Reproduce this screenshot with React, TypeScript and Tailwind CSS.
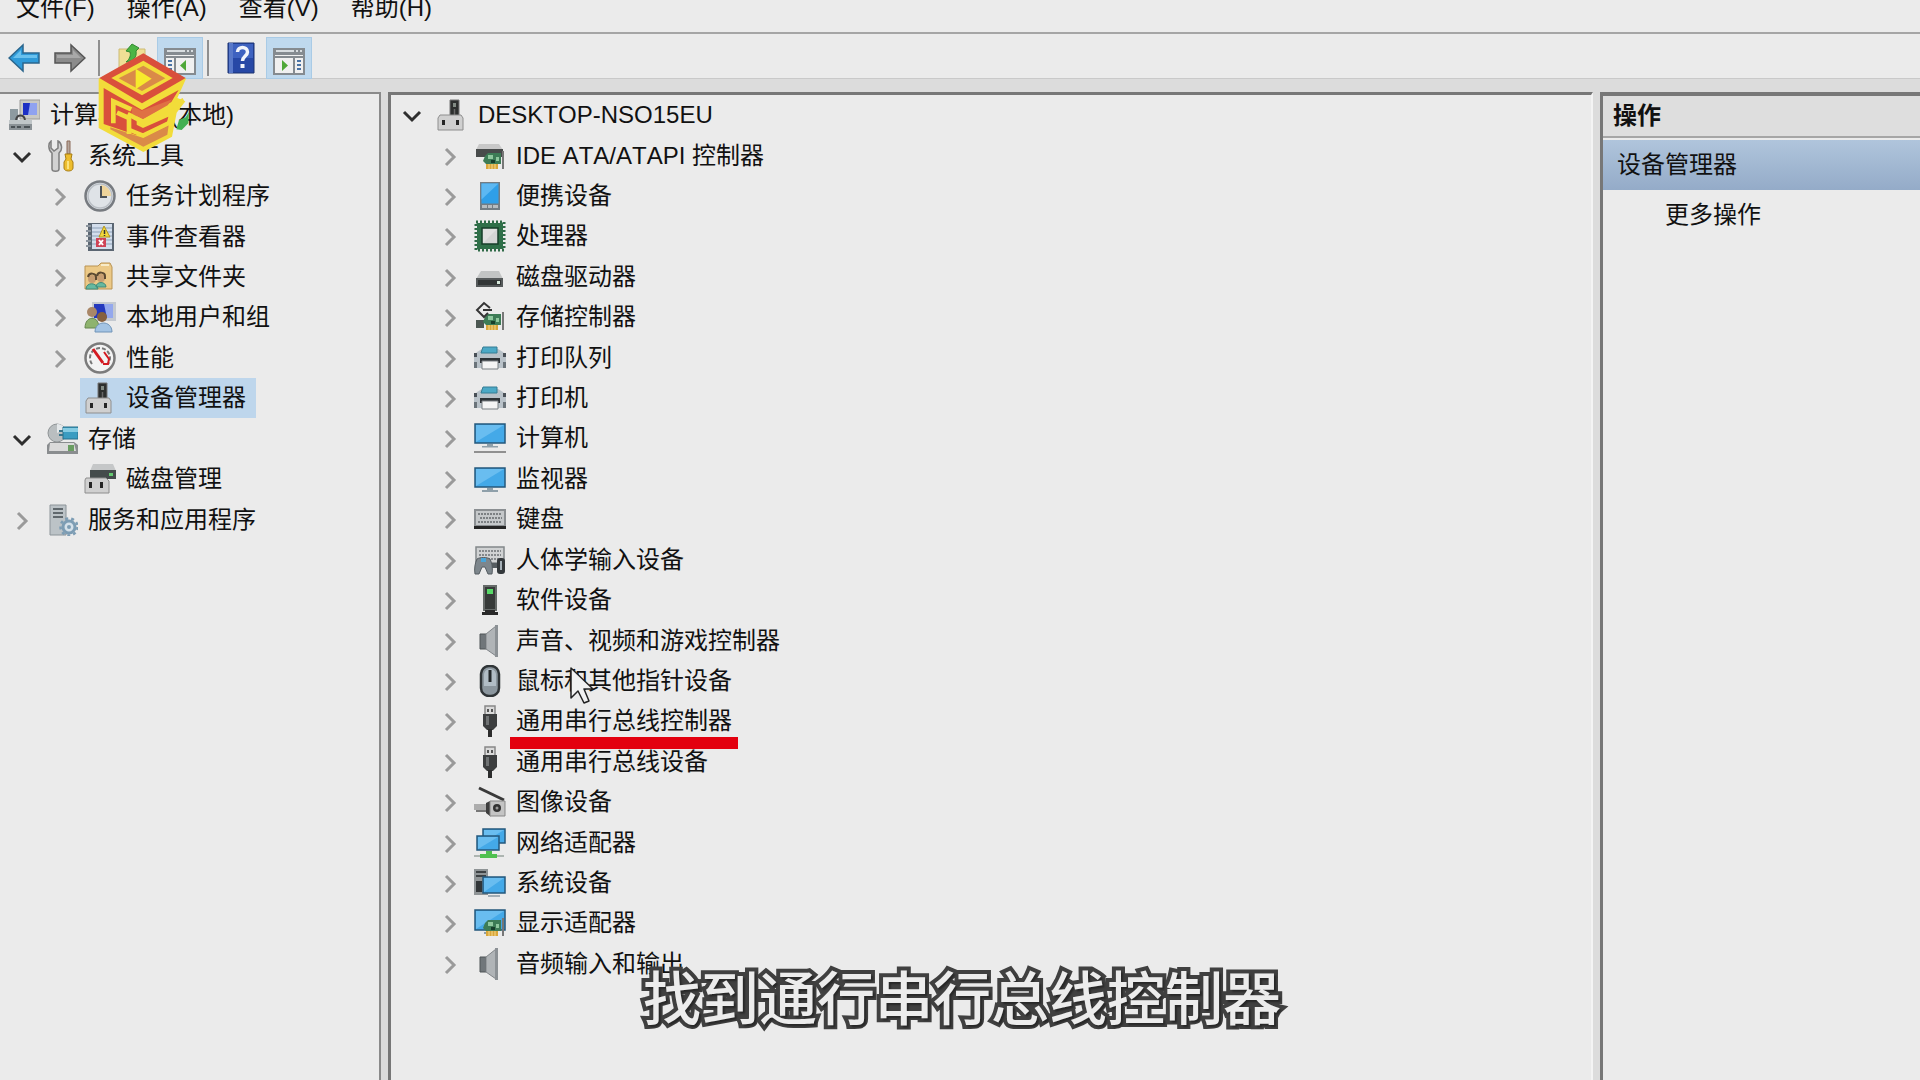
import { ReactNode } from "react";
import clsx from "clsx";

interface NodeProps {
  label: string;
  icon: ReactNode;
  level?: number;
  arrow?: "open" | "closed" | "none";
  selected?: boolean;
  children?: ReactNode;
}

const Svg = ({ children }: { children: ReactNode }) => (
  <svg viewBox="0 0 32 32" className="h-8 w-8 shrink-0" fill="none" aria-hidden="true">
    {children}
  </svg>
);

// === SHARED PARTS OF THE DEVICE ICONS
const Board = () => (
  <g>
    <path d="M11 16l3-3h13v11H12l-3-3z" fill="#3d7c56" />
    <path d="M14 15h5v4h-5zM22 17h3v4h-3z" fill="#8ec79d" />
    <path d="M17 20h4v3h-4z" fill="#173f2b" />
    <path d="M12 24h12v5H12z" fill="#d9a63a" />
    <path d="M15 24v5M18 24v5M21 24v5" stroke="#f3d98d" />
    <path d="M29 11v18" stroke="#777" strokeWidth="2" />
  </g>
);

const Screen = ({ x, y, w, h }: { x: number; y: number; w: number; h: number }) => (
  <g>
    <rect x={x} y={y} width={w} height={h} fill="#44a9e8" stroke="#24587c" strokeWidth="1.5" />
    <path d={`M${x + 1} ${y + h - 1}L${x + w - 1} ${y + 1}V${y + 1}H${x + 1}z`} fill="#69bdf0" />
  </g>
);

// === LEFT TREE ICONS
const ComputerIcon = () => (
  <Svg>
    <path d="M12 1h20v19H12z" fill="#c9c9c4" stroke="#9b9b98" />
    <path d="M15 4h14v12H15z" fill="#1d30c4" />
    <path d="M22 4h7v12h-9z" fill="#8fa2f0" />
    <path d="M2 10h8v12H2z" fill="#8d9aa0" />
    <path d="M8 21c1-6 8-6 9 0" stroke="#444" strokeWidth="2" />
    <path d="M1 21h23v10H1z" fill="#8b9296" />
    <path d="M1 21h23v4H1z" fill="#c0c6c8" />
    <path d="M3 28h4M9 28h4M16 28h6" stroke="#4b5256" strokeWidth="2" />
  </Svg>
);

const ToolsIcon = () => (
  <Svg>
    <path
      d="M5 1v7l3 3 4-3V1c4 2 5 9 1 12v16c0 3-7 3-7 0V13C2 10 2 3 5 1z"
      fill="#d2d2d2"
      stroke="#7e7e7e"
      strokeWidth="1.5"
    />
    <path d="M21 1h3v13h-3z" fill="#b6a79d" stroke="#8b6a58" />
    <path d="M19 14h7l-1 5 2 3v6c0 4-9 4-9 0v-6l2-3z" fill="#edbd2e" stroke="#a87d13" />
    <path d="M22 21v8" stroke="#fbe27d" strokeWidth="2" />
  </Svg>
);

const ClockIcon = () => (
  <Svg>
    <circle cx="16" cy="16" r="14.5" fill="#dfe3e7" stroke="#777b80" strokeWidth="2.5" />
    <circle cx="16" cy="16" r="12" stroke="#b9bec4" strokeWidth="1.5" />
    <path d="M17 5a11 11 0 0110 11H17z" fill="#eed49b" />
    <path d="M17 6v11h6" stroke="#4d5358" strokeWidth="2" />
  </Svg>
);

const EventIcon = () => (
  <Svg>
    <path d="M4 2h26v28H4z" fill="#5b6672" />
    <path d="M8 3h20v25H8z" fill="#d3deec" />
    <path d="M8 7h20M8 11h20M8 15h20M8 19h20M8 23h20" stroke="#8da1b8" />
    <path d="M2 5h5M2 10h5M2 15h5M2 20h5M2 25h5" stroke="#8b949d" strokeWidth="2" />
    <path d="M20 5l6 11H15z" fill="#f2d83b" stroke="#b2941e" />
    <path d="M20.500 9v4M20.500 14v1" stroke="#333" strokeWidth="1.500" />
    <path d="M12 17h10v9H12z" fill="#cf4357" />
    <path d="M15 19l4 5M19 19l-4 5" stroke="#fff" strokeWidth="2" />
  </Svg>
);

const ShareIcon = () => (
  <Svg>
    <path d="M1 5h13l3-3h9l2 4v22H1z" fill="#ecc987" stroke="#b99352" />
    <path d="M17 4h8" stroke="#f8ebc8" strokeWidth="2" />
    <circle cx="8" cy="18" r="4" fill="#c79e72" />
    <circle cx="17" cy="17" r="4" fill="#c79e72" />
    <path d="M4 16c1-5 8-4 8 0v3M13 15c1-5 8-4 8 0v3" stroke="#5c4a33" strokeWidth="2" />
    <path d="M2 28c0-7 11-7 12 0zM12 26c0-6 10-6 10 0z" fill="#66b9a0" stroke="#438a79" />
  </Svg>
);

const UsersIcon = () => (
  <Svg>
    <path d="M8 1h24v19H8z" fill="#c4c9d0" />
    <path d="M10 3h19v14H10z" fill="#2438bd" />
    <path d="M20 3h9v14h-6z" fill="#94a8ed" />
    <circle cx="8" cy="11" r="5" fill="#a98768" />
    <path d="M1 27c0-13 14-13 14 0z" fill="#8eb36e" stroke="#66864f" />
    <circle cx="18" cy="16" r="5" fill="#86603f" />
    <path d="M11 31c0-12 17-12 17 0z" fill="#a4c4e4" stroke="#7094b8" />
  </Svg>
);

const GaugeIcon = () => (
  <Svg>
    <circle cx="16" cy="16" r="14.5" fill="#f3f3f3" stroke="#7b7b7b" strokeWidth="2.5" />
    <path d="M8 22a10 10 0 1116 0" stroke="#777" strokeWidth="2" strokeDasharray="4 2" />
    <path d="M9 7l10 14" stroke="#d41b22" strokeWidth="3" />
    <path d="M20 10l5 7-1 5h-5" stroke="#d41b22" strokeWidth="2" />
  </Svg>
);

const DeviceIcon = () => (
  <Svg>
    <path d="M14 1h9v16h-9z" fill="#2d2f2e" stroke="#767676" />
    <path d="M17 4h3v4h-3z" fill="#828b84" />
    <path d="M18.500 10v6" stroke="#676767" strokeWidth="1.500" />
    <path d="M4 16h21l2 3v12H2V19z" fill="#d0d0d0" stroke="#8e8e8e" />
    <path d="M6 21h3v5H6zM20 21h3v5h-3z" fill="#262626" />
  </Svg>
);

const StorageIcon = () => (
  <Svg>
    <circle cx="11" cy="10" r="9" fill="#b9bec0" stroke="#8f9496" />
    <path d="M11 1a9 9 0 018 5l-8 4z" fill="#e4e8ea" />
    <path d="M17 4h15v12H17z" fill="#3a9cc1" stroke="#276e8a" />
    <path d="M17 5h15v4H17z" fill="#84cbe2" />
    <path d="M13 8h4M13 12h4" stroke="#37748a" strokeWidth="2" />
    <path d="M4 19h24l4 3v9H1v-9z" fill="#8a8d8f" />
    <path d="M4 20h24l2 8H3z" fill="#dadada" />
    <path d="M22 22h6v6h-6z" fill="#6a9d62" />
  </Svg>
);

const DiskIcon = () => (
  <Svg>
    <path d="M9 1h20l3 7H6z" fill="#c5c7c8" />
    <path d="M6 7h26v9H6z" fill="#444b4b" />
    <path d="M25 10h4v3h-4z" fill="#65ca71" />
    <path d="M2 15h20l3 3v12H1V17z" fill="#d0d0d0" stroke="#8e8e8e" />
    <path d="M5 19h3v6H5zM16 19h3v6h-3z" fill="#262626" />
  </Svg>
);

const ServicesIcon = () => (
  <Svg>
    <path d="M4 1h16v30H4z" fill="#bcc3c7" stroke="#8c9499" />
    <path d="M7 5h10M7 9h10M7 13h10" stroke="#60686d" strokeWidth="2" />
    <circle cx="23" cy="23" r="6" fill="#d5e1ea" stroke="#7d9db4" strokeWidth="3" />
    <circle cx="23" cy="23" r="8.500" stroke="#7d9db4" strokeWidth="2.500" strokeDasharray="3 3" />
    <circle cx="23" cy="23" r="2" fill="#7d9db4" />
  </Svg>
);

// === DEVICE ICONS
const IdeIcon = () => (
  <Svg>
    <path d="M5 4h20l4 6H2z" fill="#c8c8c8" />
    <path d="M2 9h27v8H2z" fill="#484b4b" />
    <Board />
  </Svg>
);

const PortableIcon = () => (
  <Svg>
    <path d="M6 2h20v28H6z" fill="#737d84" />
    <path d="M7.500 3.500h17v20h-17z" fill="#2f9fe8" />
    <path d="M7.500 3.500h17l-17 16z" fill="#5cb8f2" />
    <path d="M8 25h5v3H8zM14 25h4v3h-4zM19 25h5v3h-5z" fill="#b6bcc0" />
  </Svg>
);

const CpuIcon = () => (
  <Svg>
    <rect x="2" y="2" width="28" height="28" stroke="#2f6a47" strokeWidth="3" strokeDasharray="2 2" />
    <path d="M3 3h26v26H3z" fill="#2f7049" />
    <path d="M8 8h16v16H8z" fill="#d3d5d4" stroke="#173f2a" strokeWidth="1.500" />
    <path d="M9 23V9h14z" fill="#e0e1e0" />
  </Svg>
);

const DriveIcon = () => (
  <Svg>
    <path d="M7 10h18l4 8H2z" fill="#c2c4c4" />
    <path d="M2 17h27v9H2z" fill="#55595a" />
    <path d="M4 19h23v5H4z" fill="#323636" />
    <path d="M23 20h3v3h-3z" fill="#d6e8db" />
  </Svg>
);

const StorageControllerIcon = () => (
  <Svg>
    <path d="M2 19h8v8H2z" fill="#4c5752" />
    <Board />
    <path d="M16 7l-6-5-7 7 7 7 4-4M9 9h9" stroke="#353535" strokeWidth="2" />
  </Svg>
);

const PrinterIcon = () => (
  <Svg>
    <path d="M3 10l5-3h16l5 3 3 4v12H0V14z" fill="#b9c2c9" />
    <path d="M9 5h14v6H7z" fill="#4ca9c6" stroke="#347c94" />
    <path d="M0 11h3v4H0zM29 11h3v4h-3z" fill="#495057" />
    <path d="M0 20h3v6H0zM29 20h3v6h-3z" fill="#6a737a" />
    <path d="M6 16h20v5H6z" fill="#2e3337" />
    <path d="M8 19h16v8H8z" fill="#f4f4f4" stroke="#7b8084" />
  </Svg>
);

const PcIcon = () => (
  <Svg>
    <Screen x={1} y={2} w={30} h={19} />
    <path d="M13 22h6v2h-6zM8 24h16v1.500H8z" fill="#8fa0aa" />
    <path d="M0 29h32v2H0z" fill="#909090" />
  </Svg>
);

const MonitorIcon = () => (
  <Svg>
    <Screen x={1} y={5} w={30} h={19} />
    <path d="M13 25h6v2h-6zM8 27h16v2H8z" fill="#8fa0aa" />
  </Svg>
);

const KeyboardIcon = () => (
  <Svg>
    <path d="M0 6h32v20H0z" fill="#8b8f92" />
    <path d="M2 8h28v14H2z" fill="#c5c8ca" />
    <path d="M4 11h24M6 15h22M4 19h24" stroke="#7c8083" strokeWidth="2" strokeDasharray="2 1" />
    <path d="M0 23h32v3H0z" fill="#252525" />
  </Svg>
);

const HidIcon = () => (
  <Svg>
    <path d="M2 3h28v16H2z" fill="#d0d2d3" stroke="#83888b" strokeWidth="1.500" />
    <path d="M5 7h22M5 11h22M5 15h22" stroke="#85898c" strokeWidth="2" strokeDasharray="2 1" />
    <path d="M3 15c3-2 10-2 13 0 2 4 3 10 2 15h-4l-3-7H8l-3 7H1c-1-5 0-11 2-15z" fill="#7d868c" stroke="#565d62" />
    <path d="M7 14h5v4H7z" fill="#4aa5d8" />
    <path d="M18 19h5v5h-5z" fill="#555c60" />
    <rect x="23" y="14" width="8" height="16" rx="3" fill="#33383b" />
    <path d="M26 17h2v9h-2z" fill="#a6b1b8" />
  </Svg>
);

const SoftwareIcon = () => (
  <Svg>
    <path d="M10 2h12v24H10z" fill="#373b39" stroke="#666b69" strokeWidth="2" />
    <path d="M13 5h6v5h-6z" fill="#58d968" />
    <path d="M11 26h10v2H11zM8 28h16v3H8z" fill="#292929" />
  </Svg>
);

const SpeakerIcon = () => (
  <Svg>
    <path d="M6 9h6v15H6z" fill="#70767a" stroke="#4f5457" />
    <path d="M12 9L22 1v30l-10-7z" fill="#b0b4b7" stroke="#808488" />
    <path d="M21 0h3v32h-3z" fill="#8c9195" />
  </Svg>
);

const MouseIcon = () => (
  <Svg>
    <rect x="7" y="1" width="18" height="30" rx="8" fill="#8b969e" stroke="#2f3437" strokeWidth="2.500" />
    <path d="M10 10c0-8 12-8 12 0v11H10z" fill="#b1bdc6" />
    <path d="M16 5v12" stroke="#23282b" strokeWidth="3" />
  </Svg>
);

const UsbIcon = () => (
  <Svg>
    <path d="M11 1h10v9H11z" fill="#dadada" stroke="#888" strokeWidth="1.500" />
    <path d="M13 4h2v3h-2zM17 4h2v3h-2z" fill="#555" />
    <path d="M9 9h14v12l-4 4h-6l-4-4z" fill="#3c3e3f" />
    <path d="M12 11h3v9h-3z" fill="#6f7273" />
    <path d="M14 24h4v8h-4z" fill="#2c2c2c" />
  </Svg>
);

const ImagingIcon = () => (
  <Svg>
    <path d="M5 2l25 12" stroke="#3a3a3a" strokeWidth="3" />
    <path d="M0 18h12v6H0z" fill="#adadad" />
    <path d="M2 25h12l3 5" stroke="#777" strokeWidth="2" />
    <path d="M12 17l4-2v15l-4-3z" fill="#3d3d3d" />
    <path d="M16 15h15v15H16z" fill="#c4c4c4" stroke="#878787" />
    <circle cx="23" cy="22" r="4" fill="#333" />
    <circle cx="23" cy="22" r="1.500" fill="#999" />
  </Svg>
);

const NetworkIcon = () => (
  <Svg>
    <Screen x={9} y={2} w={22} h={14} />
    <Screen x={3} y={9} w={22} h={14} />
    <path d="M12 24h6v3h-6zM6 27h17v4H6z" fill="#4fc050" />
    <path d="M0 28h6v2H0zM23 28h7v2h-7z" fill="#adb5b1" />
  </Svg>
);

const SystemIcon = () => (
  <Svg>
    <path d="M0 2h14v26H0z" fill="#8f9496" />
    <path d="M2 5h10M2 9h10" stroke="#3e4244" strokeWidth="2" />
    <path d="M2 14h6v11H2z" fill="#323638" />
    <Screen x={9} y={10} w={22} h={16} />
    <path d="M14 28h12v2H14z" fill="#a3aeb5" />
  </Svg>
);

const DisplayIcon = () => (
  <Svg>
    <Screen x={1} y={3} w={30} h={20} />
    <path d="M10 25h5v2h-5z" fill="#8fa0aa" />
    <Board />
  </Svg>
);

const Chevron = ({ open }: { open: boolean }) =>
  open ? (
    <svg viewBox="0 0 28 28" className="h-7 w-7" fill="none" aria-hidden="true">
      <path d="M6 11l8 8 8-8" stroke="#2e2e2e" strokeWidth="3" />
    </svg>
  ) : (
    <svg viewBox="0 0 28 28" className="h-7 w-7" fill="none" aria-hidden="true">
      <path d="M10 7l8 8-8 8" stroke="#9a9a9a" strokeWidth="3" />
    </svg>
  );

const TreeNode = ({ label, icon, level = 0, arrow = "closed", selected, children }: NodeProps) => (
  <li className={clsx("flex items-center", level === 1 && "pl-[38px]")}>
    {arrow === "none" ? (
      <span className="mr-[6px] w-7 shrink-0" />
    ) : (
      <button className="mr-[6px] w-7 shrink-0" aria-label={label}>
        <Chevron open={arrow === "open"} />
      </button>
    )}
    <button
      className={clsx(
        "relative flex h-10 items-center gap-[10px] pr-[10px] pl-1 whitespace-nowrap",
        selected && "bg-[#bed6ec]"
      )}
    >
      {icon}
      <span>{label}</span>
      {children}
    </button>
  </li>
);

// === MOUSE POINTER OVER THE LIST
const Pointer = () => (
  <svg viewBox="0 0 24 38" className="absolute top-[6px] left-[100px] z-10 h-[38px] w-6" aria-hidden="true">
    <path
      d="M1 1v30l7-7 6 12 5-2-5-12h9z"
      fill="#f1f1f1"
      stroke="#222"
      strokeWidth="1.500"
      strokeLinejoin="round"
    />
  </svg>
);

const devices: NodeProps[] = [
  { label: "IDE ATA/ATAPI 控制器", icon: <IdeIcon /> },
  { label: "便携设备", icon: <PortableIcon /> },
  { label: "处理器", icon: <CpuIcon /> },
  { label: "磁盘驱动器", icon: <DriveIcon /> },
  { label: "存储控制器", icon: <StorageControllerIcon /> },
  { label: "打印队列", icon: <PrinterIcon /> },
  { label: "打印机", icon: <PrinterIcon /> },
  { label: "计算机", icon: <PcIcon /> },
  { label: "监视器", icon: <MonitorIcon /> },
  { label: "键盘", icon: <KeyboardIcon /> },
  { label: "人体学输入设备", icon: <HidIcon /> },
  { label: "软件设备", icon: <SoftwareIcon /> },
  { label: "声音、视频和游戏控制器", icon: <SpeakerIcon /> },
  { label: "鼠标和其他指针设备", icon: <MouseIcon />, children: <Pointer /> },
  {
    label: "通用串行总线控制器",
    icon: <UsbIcon />,
    children: <span className="absolute top-9 right-1 left-10 z-10 h-3 bg-[#e3000f]" />,
  },
  { label: "通用串行总线设备", icon: <UsbIcon /> },
  { label: "图像设备", icon: <ImagingIcon /> },
  { label: "网络适配器", icon: <NetworkIcon /> },
  { label: "系统设备", icon: <SystemIcon /> },
  { label: "显示适配器", icon: <DisplayIcon /> },
  { label: "音频输入和输出", icon: <SpeakerIcon /> },
];

const tools: NodeProps[] = [
  { label: "系统工具", icon: <ToolsIcon />, arrow: "open" },
  { label: "任务计划程序", icon: <ClockIcon />, level: 1 },
  { label: "事件查看器", icon: <EventIcon />, level: 1 },
  { label: "共享文件夹", icon: <ShareIcon />, level: 1 },
  { label: "本地用户和组", icon: <UsersIcon />, level: 1 },
  { label: "性能", icon: <GaugeIcon />, level: 1 },
  { label: "设备管理器", icon: <DeviceIcon />, level: 1, arrow: "none", selected: true },
  { label: "存储", icon: <StorageIcon />, arrow: "open" },
  { label: "磁盘管理", icon: <DiskIcon />, level: 1, arrow: "none" },
  { label: "服务和应用程序", icon: <ServicesIcon /> },
];

const Arrow = ({ forward }: { forward?: boolean }) => (
  <Svg>
    {forward ? (
      <>
        <path d="M1 11h16V3l14 13-14 13v-8H1z" fill="#8b8b8b" stroke="#555" strokeWidth="1.500" />
        <path d="M3 13h16V8l8 8H3z" fill="#a9a9a9" />
      </>
    ) : (
      <>
        <path d="M31 11H15V3L1 16l14 13v-8h16z" fill="#2f9ad8" stroke="#2b668d" strokeWidth="1.500" />
        <path d="M29 13H13V8l-8 8h24z" fill="#69c1ee" />
      </>
    )}
  </Svg>
);

const PaneIcon = ({ right }: { right?: boolean }) => (
  <Svg>
    <path d="M1 5h30v25H1z" fill="#f0f0f0" stroke="#858b90" strokeWidth="2" />
    <path d="M1 5h30v6H1z" fill="#858b90" />
    <path d="M3 7h18M23 7h2M27 7h2" stroke="#d8dde0" strokeWidth="2" />
    <path d="M2 13h28" stroke="#858b90" strokeWidth="2" />
    {right ? (
      <>
        <path d="M21 14v16" stroke="#858b90" strokeWidth="2" />
        <path d="M24 17h4M24 21h4M24 25h4" stroke="#4a73a5" strokeWidth="2" />
        <path d="M9 16l6 5.500L9 27z" fill="#4fa838" />
      </>
    ) : (
      <>
        <path d="M11 14v16" stroke="#858b90" strokeWidth="2" />
        <path d="M4 17h4M4 21h4M4 25h4" stroke="#4a73a5" strokeWidth="2" />
        <path d="M22 16l-6 5.500 6 5.500z" fill="#4fa838" />
      </>
    )}
  </Svg>
);

const HelpIcon = () => (
  <Svg>
    <path d="M3 1h26v30H3z" fill="#2748a6" stroke="#1c3270" />
    <path d="M4 1h4v30H4z" fill="#5878c9" />
    <path d="M8 2h20v14H8z" fill="#3e62c0" />
    <path d="M12.500 10c0-6 10-6 10 0 0 4-5 4-5 9" stroke="#f1f4fb" strokeWidth="3.500" />
    <path d="M15.500 22h4v4h-4z" fill="#f1f4fb" />
  </Svg>
);

const FolderUpIcon = () => (
  <Svg>
    <path d="M3 7h26v23H3z" fill="#efdf95" stroke="#cdbb74" />
    <path d="M10 9l6-7 7 4-3 3c1 6-2 10-10 11 4-3 5-7 4-10z" fill="#4cb545" stroke="#338a31" />
  </Svg>
);

// === CHANNEL LOGO
const Logo = () => (
  <svg viewBox="0 0 390 360" className="absolute top-10 left-[85px] z-20 h-[120px] w-[130px]" fill="none" aria-hidden="true">
    <path d="M274 268l8-28 20-8 10-16-2 34-20 20z" fill="#43b052" />
    <path d="M175 42L303 116l-26 58 24 10-26 34-14 72-86 46L41 264V116z" fill="#f2dc3a" />
    <path d="M175 40L302 114 171 190 43 114z" fill="#d94f3c" />
    <path d="M175 62l88 52-92 52-92-52z" fill="#f2dc3a" />
    <path d="M175 77l66 38-70 38-70-38z" fill="#da8a48" />
    <path d="M152 86l48 30-48 32z" fill="#f7ea2c" />
    {/* front faces */}
    <path d="M56 144l115 66 110-60-22 36-84 48-20-10v62l-99-34z" fill="#d94f3c" />
    <path d="M140 198l30 14 92-34-14 18-74 42-34-16z" fill="#df7044" />
    <path d="M76 262l99 32 76-38-4 28-72 36-99-52z" fill="#da8a48" />
    <path d="M150 252l24 12 76-34-4 16-72 38-24-8z" fill="#d94f3c" />
    <path d="M85 250v-66l54 24M96 218l36 16v48" stroke="#f2dc3a" strokeWidth="14" />
    <path d="M128 222l46 24 122-66" stroke="#f2dc3a" strokeWidth="13" />
    <path d="M130 268l44 18 92-44" stroke="#f2dc3a" strokeWidth="12" />
  </svg>
);

const App = () => {
  return (
    <div className="relative flex h-screen flex-col overflow-hidden bg-[#dcdcdc] font-['Liberation_Sans','Noto_Sans_CJK_SC',sans-serif] text-[24px] leading-8 text-[#111] [font-kerning:none]">
      {/* === MENU */}
      <nav className="flex h-8 shrink-0 items-start gap-8 bg-[#ebebeb] pl-4 leading-4">
        <button>文件(F)</button>
        <button>操作(A)</button>
        <button>查看(V)</button>
        <button>帮助(H)</button>
      </nav>

      {/* === TOOLBAR */}
      <div className="flex h-[47px] shrink-0 items-center border-t-2 border-b border-t-[#a5a5a5] border-b-[#c9c9c9] bg-[#ebebeb] pt-1 pl-2">
        <button aria-label="后退">
          <Arrow />
        </button>
        <button aria-label="前进" className="ml-[14px]">
          <Arrow forward />
        </button>
        <span className="ml-3 h-9 w-[2px] bg-[#8f8f8f]" />
        <button aria-label="上一级" className="ml-4">
          <FolderUpIcon />
        </button>
        <button
          aria-label="显示/隐藏控制台树"
          className="ml-[9px] flex h-[42px] w-[46px] items-center justify-center border border-[#a9cbe6] bg-[#bfd9ee] pt-1"
        >
          <PaneIcon />
        </button>
        <span className="ml-1 h-9 w-[2px] bg-[#8f8f8f]" />
        <button aria-label="帮助" className="ml-4">
          <HelpIcon />
        </button>
        <button
          aria-label="显示/隐藏操作窗格"
          className="ml-[9px] flex h-[42px] w-[46px] items-center justify-center border border-[#a9cbe6] bg-[#bfd9ee] pt-1"
        >
          <PaneIcon right />
        </button>
      </div>

      {/* === PANES */}
      <main className="mt-[13px] flex min-h-0 flex-1 gap-[7px]">
        <section className="w-[381px] shrink-0 border-t-2 border-r-2 border-[#8a8a8a] bg-[#ebebeb] pt-px">
          <ul className="grid h-[445px] auto-rows-fr pl-2">
            <li className="flex items-center gap-[10px] whitespace-nowrap">
              <ComputerIcon />
              <span>计算机管理(本地)</span>
            </li>
            {tools.map((each) => (
              <TreeNode key={each.label} {...each} />
            ))}
          </ul>
        </section>

        <section className="min-w-0 flex-1 border-t-3 border-r-2 border-l-3 border-t-[#777] border-r-[#f4f4f4] border-l-[#777] bg-[#ebebeb]">
          <ul className="grid h-[889px] auto-rows-fr pl-[7px]">
            <TreeNode label="DESKTOP-NSO15EU" icon={<DeviceIcon />} arrow="open" />
            {devices.map((each) => (
              <TreeNode key={each.label} level={1} {...each} />
            ))}
          </ul>
        </section>

        <aside className="w-[320px] shrink-0 border-t-4 border-l-3 border-[#777] bg-[#ebebeb]">
          <h2 className="flex h-[42px] items-center border-b-2 border-[#a6a6a6] bg-[#dedede] pl-[10px] font-bold">
            操作
          </h2>
          <div className="mt-[2px] flex h-[50px] items-center bg-linear-to-b from-[#b0c5dc] to-[#94abc8] pl-[14px]">
            设备管理器
          </div>
          <button className="flex h-[50px] w-full items-center pl-[62px]">更多操作</button>
        </aside>
      </main>

      <Logo />

      {/* === CAPTION */}
      <p className="absolute inset-x-0 bottom-11 z-20 pl-1 text-center text-[58px] leading-[72px] font-medium whitespace-nowrap text-[#ececec] [-webkit-text-stroke:8px_#404040] [paint-order:stroke_fill] [text-shadow:2px_2px_2px_#0006]">
        找到通行串行总线控制器
      </p>
    </div>
  );
};

export default App;
